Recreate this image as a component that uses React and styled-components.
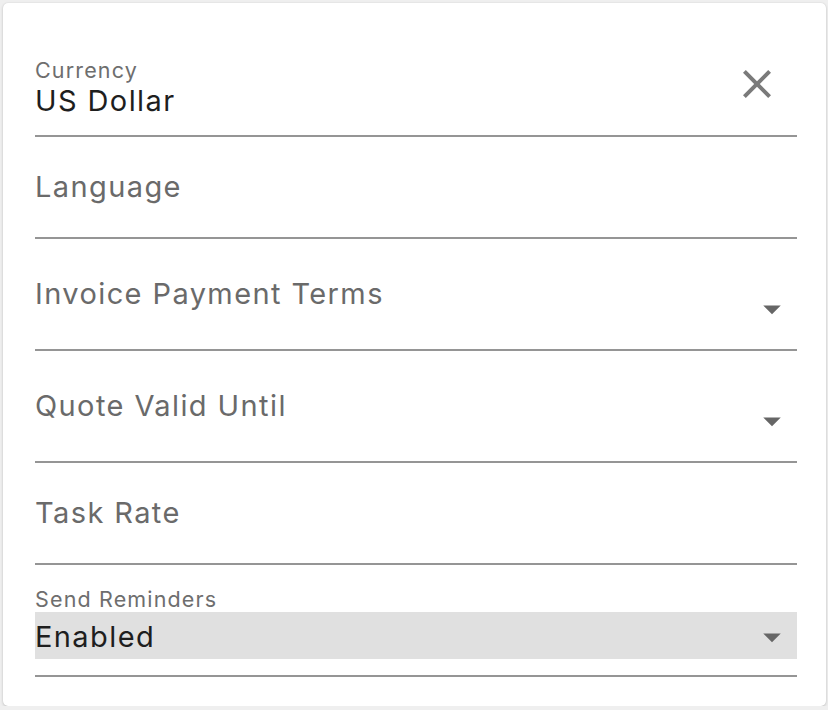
import React from "react";
import styled, { createGlobalStyle } from "styled-components";

const GlobalStyle = createGlobalStyle`
  html, body {
    margin: 0;
    padding: 0;
    background: #efefef;
  }
  body {
    font-family: Inter, "Liberation Sans", Arial, sans-serif;
    -webkit-font-smoothing: antialiased;
  }
`;

const Card = styled.div`
  margin: 3px 2px 0 3px;
  background: #ffffff;
  border-radius: 5px;
  box-shadow: 0 1px 3px rgba(0, 0, 0, 0.18), 0 0 1px rgba(0, 0, 0, 0.12);
  padding: 0 29px 29px 32px;
`;

const Field = styled.div`
  box-sizing: border-box;
  display: flex;
  align-items: flex-start;
  justify-content: space-between;
  height: ${(p) => p.$h}px;
  padding-top: ${(p) => p.$pt}px;
  border-bottom: 2px solid #959595;
`;

const Stack = styled.div`
  display: flex;
  flex-direction: column;
  flex: 1;
  min-width: 0;
`;

const SmallLabel = styled.div`
  font-size: 21.5px;
  line-height: 21px;
  color: #6e6e6e;
  letter-spacing: 1.15px;
  margin-bottom: ${(p) => p.$gap || 0}px;
`;

const Placeholder = styled.div`
  font-size: 29px;
  line-height: 28px;
  color: #6a6a6a;
  letter-spacing: 1.4px;
`;

const Value = styled.div`
  font-size: 29px;
  line-height: 28px;
  color: #1e1e1e;
  letter-spacing: 1.4px;
`;

const SelectBox = styled.div`
  display: flex;
  align-items: center;
  justify-content: space-between;
  background: #e0e0e0;
  height: 47px;
  padding-top: 3px;
  box-sizing: border-box;
`;

const IconSlot = styled.div`
  flex: none;
  display: flex;
  margin-top: ${(p) => p.$mt || 0}px;
  margin-right: ${(p) => p.$mr || 0}px;
  color: ${(p) => p.$color || "#767676"};
`;

const ClearIcon = ({ size = 48 }) => (
  <svg width={size} height={size} viewBox="0 0 24 24" fill="currentColor">
    <path d="M19 6.41L17.59 5 12 10.59 6.41 5 5 6.41 10.59 12 5 17.59 6.41 19 12 13.41 17.59 19 19 17.59 13.41 12z" />
  </svg>
);

const DropIcon = ({ size = 42 }) => (
  <svg width={size} height={size} viewBox="0 0 24 24" fill="currentColor">
    <path d="M7 10l5 5 5-5z" />
  </svg>
);

export default function App() {
  return (
    <>
      <GlobalStyle />
      <Card>
        <Field $h={134} $pt={57}>
          <Stack>
            <SmallLabel $gap={6}>Currency</SmallLabel>
            <Value>US Dollar</Value>
          </Stack>
          <IconSlot $mr={16} $color="#7a7a7a">
            <ClearIcon />
          </IconSlot>
        </Field>

        <Field $h={102} $pt={36}>
          <Placeholder>Language</Placeholder>
        </Field>

        <Field $h={112} $pt={41}>
          <Placeholder>Invoice Payment Terms</Placeholder>
          <IconSlot $mt={8} $mr={4} $color="#666666">
            <DropIcon />
          </IconSlot>
        </Field>

        <Field $h={112} $pt={41}>
          <Placeholder>Quote Valid Until</Placeholder>
          <IconSlot $mt={8} $mr={4} $color="#666666">
            <DropIcon />
          </IconSlot>
        </Field>

        <Field $h={102} $pt={36}>
          <Placeholder>Task Rate</Placeholder>
        </Field>

        <Field $h={112} $pt={24}>
          <Stack>
            <SmallLabel $gap={2}>Send Reminders</SmallLabel>
            <SelectBox>
              <Value>Enabled</Value>
              <IconSlot $mr={4} $color="#666666">
                <DropIcon />
              </IconSlot>
            </SelectBox>
          </Stack>
        </Field>
      </Card>
    </>
  );
}
